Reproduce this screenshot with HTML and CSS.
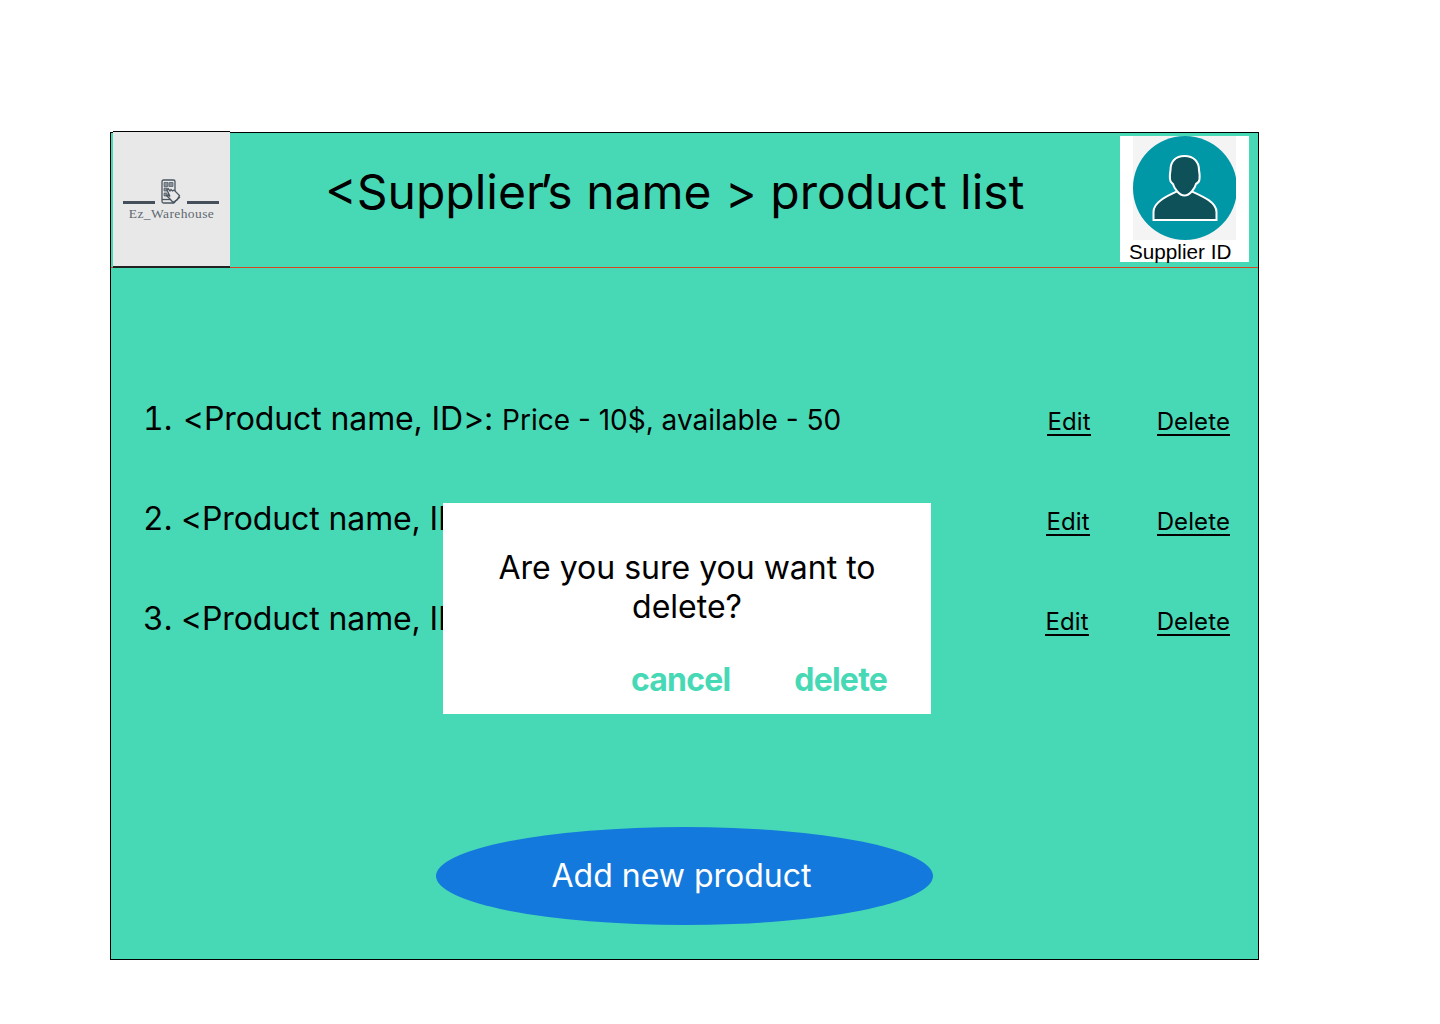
FILE: index.html
```html
<!DOCTYPE html>
<html lang="en">
<head>
  <meta charset="UTF-8">
  <meta name="viewport" content="width=device-width, initial-scale=1.0">
  <title>Product list</title>
  <link rel="stylesheet" href="styles.css">
</head>
<body>
  <div class="frame">
    <header class="top-bar">
      <div class="logo">
        <div class="logo-mark">
          <span class="logo-line"></span>
          <svg class="logo-icon" width="22" height="26" viewBox="0 0 22 26" fill="none" stroke="#4a5560" stroke-width="1.300">
            <rect x="2" y="1" width="13" height="23" rx="1.500"/>
            <path d="M2 20.500h13"/>
            <path d="M4 3.500h4v4H4zM4 9h3v3H4zM4 14h3v3H4zM9 3.500h4v4H9z" fill="#8a9299" stroke-width="0.700"/>
            <path d="M8 9.500l2 2.500 1-1.500 1.500 1.500 1.500-1 5.500 5.500-2.500 4.500-4 2.500-2.500-3-4-4 1.500-.5 2 1.500-3-6.500z" fill="#e8e8e8"/>
            <path d="M13 24l7-6"/>
          </svg>
          <span class="logo-line"></span>
        </div>
        <div class="logo-name">Ez_Warehouse</div>
      </div>
      <h1 class="page-title">&lt;Supplie<span class="tight">r’</span>s name &gt; product list</h1>
      <div class="supplier">
        <svg class="avatar" width="103" height="104" viewBox="0 0 103 104">
          <rect width="103" height="104" fill="#f4f4f4"/>
          <circle cx="52" cy="52" r="52" fill="#0097a7"/>
          <g fill="#0e5159" stroke="#fff" stroke-width="2">
            <path d="M20.500 84 V76 C20.500 66 34 60 45 55 L58 55 C69 60 83.500 66 83.500 76 V84 Z"/>
            <path d="M51.500 20 C42 20 37.500 26 37.500 34 C37 37 36.500 40 37 43 C37 46 39 47 40 48 C41 52 46 59.500 51.500 59.500 C57 59.500 62 52 63 48 C65 47 66.500 46 66.500 43 C67 40 66.500 37 66 34 C66 26 61 20 51.500 20 Z"/>
          </g>
        </svg>
        <div class="supplier-id">Supplier ID</div>
      </div>
    </header>

    <main class="content">
      <ul class="product-list">
        <li class="product-row">
          <div class="product-text"><span class="num">1.</span>&lt;Product name, ID&gt;: <span class="details">Price - 10$, available - 50</span></div>
          <a class="row-link edit" href="#">Edit</a>
          <a class="row-link" href="#">Delete</a>
        </li>
        <li class="product-row">
          <div class="product-text"><span class="num narrow">2.</span>&lt;Product name, II</div>
          <a class="row-link edit edit-2" href="#">Edit</a>
          <a class="row-link" href="#">Delete</a>
        </li>
        <li class="product-row">
          <div class="product-text"><span class="num narrow">3.</span>&lt;Product name, II</div>
          <a class="row-link edit edit-3" href="#">Edit</a>
          <a class="row-link" href="#">Delete</a>
        </li>
      </ul>
      <div class="add-wrap">
        <button class="add-btn">Add new product</button>
      </div>
    </main>

    <div class="dialog">
      <p class="dialog-text">Are you sure you want to delete?</p>
      <div class="dialog-actions">
        <a class="dialog-btn" href="#">cancel</a>
        <a class="dialog-btn" href="#">delete</a>
      </div>
    </div>
  </div>
</body>
</html>
```

FILE: styles.css
```css
body {
  margin: 0;
  padding: 132px 0 0 110px;
  background-color: white;
  font-family: Inter, sans-serif;
  color: black;
}
.frame {
  position: relative;
  box-sizing: border-box;
  width: 1149px;
  height: 828px;
  border: 1px solid black;
  background-color: #47d9b5;
}
.top-bar {
  display: flex;
  align-items: flex-start;
  height: 134px;
  border-bottom: 1px solid #d8451f;
  padding-left: 2px;
}
.logo {
  box-sizing: border-box;
  width: 117px;
  height: 137px;
  margin-top: -2px;
  padding-top: 47px;
  background-color: #e8e8e8;
  border-top: 1px solid black;
  border-bottom: 2px solid #222;
}
.logo-mark {
  display: flex;
  justify-content: center;
  align-items: flex-end;
  gap: 5px;
  padding-right: 1px;
}
.logo-line {
  width: 32px;
  height: 3px;
  margin-bottom: 1px;
  background-color: #45505b;
}
.logo-name {
  margin-top: 1px;
  font-family: "Liberation Serif", serif;
  font-size: 13.500px;
  letter-spacing: 0.400px;
  text-align: center;
  color: #5f6870;
}
.page-title {
  flex: 1;
  margin: 30px 0 0 0;
  padding-left: 95px;
  font-size: 48px;
  font-weight: 400;
  line-height: 58px;
}
.tight {
  letter-spacing: -5px;
}
.supplier {
  width: 129px;
  height: 126px;
  margin: 3px 9px 0 0;
  background-color: white;
}
.avatar {
  display: block;
  margin-left: 13px;
}
.supplier-id {
  padding-left: 9px;
  font-family: "Liberation Sans", sans-serif;
  font-size: 20.700px;
  line-height: 24px;
}
.content {
  padding: 100px 28px 0 32px;
}
.product-list {
  list-style: none;
  margin: 0;
  padding: 0;
}
.product-row {
  display: flex;
  align-items: center;
  height: 100px;
}
.product-text {
  flex: 1;
  font-size: 32px;
  letter-spacing: -0.120px;
  white-space: nowrap;
}
.num {
  display: inline-block;
  width: 40px;
  font-feature-settings: "tnum";
}
.num.narrow {
  width: 38px;
}
.details {
  font-size: 28px;
  letter-spacing: 0;
}
.row-link {
  margin-top: 9px;
  border-bottom: 2px solid black;
  font-size: 24px;
  line-height: 25px;
  letter-spacing: 0.100px;
  color: black;
  text-decoration: none;
}
.edit {
  margin-right: 66px;
}
.edit-2 {
  margin-right: 67px;
}
.edit-3 {
  margin-right: 68px;
}
.add-wrap {
  margin-top: 159px;
  padding-left: 293px;
}
.add-btn {
  display: block;
  width: 497px;
  height: 98px;
  border: none;
  border-radius: 50%;
  padding: 0 6px 2px 0;
  background-color: #1479dc;
  color: white;
  font-family: Inter, sans-serif;
  font-size: 32px;
}
.dialog {
  position: absolute;
  left: 332px;
  top: 370px;
  box-sizing: border-box;
  width: 488px;
  height: 211px;
  padding: 45px 40px 0;
  background-color: white;
}
.dialog-text {
  margin: 0;
  font-size: 32px;
  line-height: 39px;
  text-align: center;
}
.dialog-actions {
  display: flex;
  justify-content: flex-end;
  gap: 64px;
  margin-top: 34px;
  padding-right: 4px;
}
.dialog-btn {
  font-size: 32px;
  font-weight: 700;
  line-height: 39px;
  letter-spacing: -0.800px;
  color: #47d9b5;
  text-decoration: none;
}
```
